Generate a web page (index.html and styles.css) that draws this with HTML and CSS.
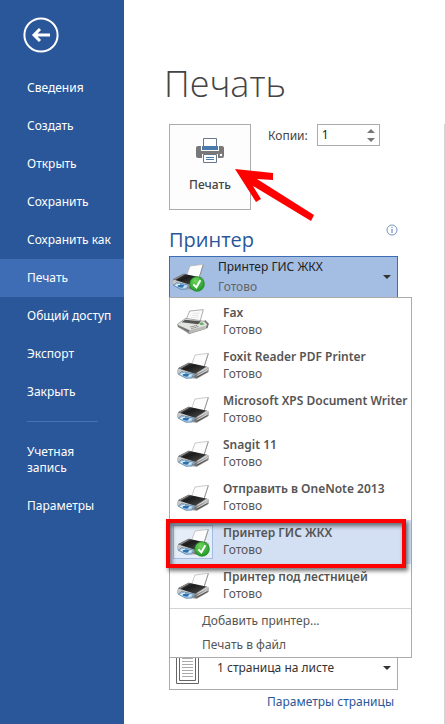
FILE: index.html
```html
<!DOCTYPE html>
<html lang="ru">
<head>
<meta charset="utf-8">
<meta name="viewport" content="width=device-width, initial-scale=1">
<title>Печать</title>
<link rel="stylesheet" href="styles.css">
</head>
<body>
<svg class="defs" aria-hidden="true">
  <defs>
    <linearGradient id="lid" x1="0" y1="0" x2="1" y2="1"><stop offset="0" stop-color="#555"/><stop offset=".4" stop-color="#1c1c1c"/><stop offset="1" stop-color="#555"/></linearGradient>
    <linearGradient id="side" x1="0" y1="0" x2="0" y2="1"><stop offset="0" stop-color="#ccc"/><stop offset="1" stop-color="#666"/></linearGradient>
    <radialGradient id="ok" cx=".4" cy=".3" r=".8"><stop offset="0" stop-color="#6fd45c"/><stop offset="1" stop-color="#169022"/></radialGradient>
  </defs>
  <symbol id="printer" viewBox="0 0 96 78">
    <path d="M2 60 40 76 60 77 94 56 92 48 50 62Z" fill="#aaa"/>
    <path d="M54 6 94 1 81 42 44 34Z" fill="#fcfcfc" stroke="#b0b0b0" stroke-width="2"/>
    <path d="M94 2 81 42" stroke="#777" stroke-width="2"/>
    <path d="M0 54 6 45 56 60 52 70 2 62Z" fill="#c5c7c8" stroke="#888"/>
    <path d="M3 46 35 29 90 41 56 63Z" fill="url(#lid)"/>
    <path d="M3 46 35 29 41 30 10 48Z" fill="#888"/>
    <path d="M55 62 88 41 95 44 94 57 58 76 49 72Z" fill="url(#side)" stroke="#777"/>
    <path d="M61 61 89 45M61 68 91 52" stroke="#f4f4f4" stroke-width="2"/>
    <path d="M61 72 92 55" stroke="#333" stroke-width="2"/>
    <path d="M4 64 14 56 50 63 44 75 27 76Z" fill="#a8cbea" stroke="#44729c" stroke-width="2"/>
    <path d="M17 61 37 63 31 71 19 69Z" fill="#2b71ac"/>
    <path d="M11 65 24 60M36 71 42 65" stroke="#fff" stroke-width="3"/>
  </symbol>
  <symbol id="fax" viewBox="0 0 96 78">
    <path d="M4 49 36 76 92 57 90 50Z" fill="#aaa"/>
    <path d="M38 6 79 2 69 38 27 33Z" fill="#fafafa" stroke="#888" stroke-width="2"/>
    <path d="M47 14 68 12M44 20 66 18M42 26 64 24" stroke="#ddd" stroke-width="2"/>
    <path d="M2 45 26 28 84 37 92 47 86 59 37 73 3 53Z" fill="#e2e4df" stroke="#888" stroke-width="2"/>
    <path d="M24 32 72 37 63 46 14 40Z" fill="#555"/>
    <path d="M3 48 38 64 37 72 3 53Z" fill="#777"/>
    <path d="M38 64 86 50 85 59 38 73Z" fill="#b7bab5"/>
    <path d="M40 54 60 49M43 59 66 52" stroke="#777" stroke-width="3" stroke-dasharray="4 2"/>
    <path d="M66 43 76 40 82 46 72 49Z" fill="#64ad61"/>
    <path d="M83 35 93 45 89 57" fill="none" stroke="#777" stroke-width="5"/>
  </symbol>
  <symbol id="check" viewBox="0 0 48 48">
    <circle cx="24" cy="24" r="22" fill="url(#ok)" stroke="#16881d" stroke-width="2"/>
    <path d="M13 25 22 34 34 13" fill="none" stroke="#fff" stroke-width="6"/>
  </symbol>
</svg>

<div class="backstage">
  <nav class="sidebar" aria-label="Файл">
    <button class="back" type="button" aria-label="Назад">
      <svg viewBox="0 0 36 36"><circle cx="18" cy="18" r="16.6" fill="none" stroke="#fff" stroke-width="2"/><path d="M27 18H11M17 12 11 18 17 24" fill="none" stroke="#fff" stroke-width="3"/></svg>
    </button>
    <a class="nav-item" href="#">Сведения</a>
    <a class="nav-item" href="#">Создать</a>
    <a class="nav-item" href="#">Открыть</a>
    <a class="nav-item" href="#">Сохранить</a>
    <a class="nav-item" href="#">Сохранить как</a>
    <a class="nav-item current" href="#" aria-current="page">Печать</a>
    <a class="nav-item" href="#">Общий доступ</a>
    <a class="nav-item" href="#">Экспорт</a>
    <a class="nav-item" href="#">Закрыть</a>
    <hr class="nav-rule">
    <a class="nav-item account" href="#">Учетная запись</a>
    <a class="nav-item" href="#">Параметры</a>
  </nav>

  <main class="content">
    <h1 class="title">Печать</h1>
    <div class="panel">
      <div class="print-row">
        <button class="print-button" type="button">
          <svg class="print-icon" viewBox="0 0 28 26">
            <path d="M2 8H26Q28 8 28 10V18Q28 20 26 20H2Q0 20 0 18V10Q0 8 2 8Z" fill="#7a7778"/>
            <path d="M5 7H23V13H5Z" fill="#fcfcfc"/>
            <path d="M7.500 8V.5H20.500V8" fill="#fff" stroke="#66788a"/>
            <path d="M6 8H22V12H6Z" fill="#4b7baa"/>
            <path d="M6 16H22V26H6Z" fill="#fcfcfc"/>
            <path d="M7.500 16.500H20.500V24.500H7.500Z" fill="#fff" stroke="#66788a"/>
            <path d="M10 19.500H18M10 21.500H18" stroke="#4b7baa"/>
            <circle cx="25" cy="17" r="1.200" fill="#fff"/>
          </svg>
          <span>Печать</span>
        </button>
        <label class="copies-label" for="copies">Копии:</label>
        <div class="spinner">
          <input id="copies" type="number" value="1" min="1">
          <div class="steps">
            <button type="button" aria-label="Больше"><svg viewBox="0 0 8 4"><path d="M0 4 4 0 8 4Z"/></svg></button>
            <button type="button" aria-label="Меньше"><svg viewBox="0 0 8 4"><path d="M0 0H8L4 4Z"/></svg></button>
          </div>
        </div>
        <svg class="pointer" viewBox="0 0 80 52" aria-hidden="true"><path d="M0 0 38 4V11L22 10 79 46 76 52 18 17 26 30 21 33Z" fill="#f00"/></svg>
      </div>

      <div class="section-head">
        <h2>Принтер</h2>
        <svg class="info" viewBox="0 0 12 12" role="img" aria-label="Сведения о принтере"><circle cx="6" cy="6" r="5" fill="#fff" stroke="#7195c0"/><path d="M6 5V9M6 3V4" stroke="#4c78ac"/></svg>
      </div>

      <div class="printer-picker">
        <button class="printer-current" type="button" aria-haspopup="listbox" aria-expanded="true">
          <span class="device"><svg class="device-icon"><use href="#printer"/></svg><svg class="ready"><use href="#check"/></svg></span>
          <span class="current-text"><span>Принтер ГИС ЖКХ</span><span class="state">Готово</span></span>
          <svg class="caret" viewBox="0 0 8 4"><path d="M0 0H8L4 4Z"/></svg>
        </button>
        <div class="menu">
          <ul class="printers" role="listbox" aria-label="Принтер">
            <li class="printer" role="option"><span class="device"><svg class="device-icon"><use href="#fax"/></svg></span><span class="text"><b>Fax</b><span>Готово</span></span></li>
            <li class="printer" role="option"><span class="device"><svg class="device-icon"><use href="#printer"/></svg></span><span class="text"><b>Foxit Reader PDF Printer</b><span>Готово</span></span></li>
            <li class="printer" role="option"><span class="device"><svg class="device-icon"><use href="#printer"/></svg></span><span class="text"><b>Microsoft XPS Document Writer</b><span>Готово</span></span></li>
            <li class="printer" role="option"><span class="device"><svg class="device-icon"><use href="#printer"/></svg></span><span class="text"><b>Snagit 11</b><span>Готово</span></span></li>
            <li class="printer" role="option"><span class="device"><svg class="device-icon"><use href="#printer"/></svg></span><span class="text"><b>Отправить в OneNote 2013</b><span>Готово</span></span></li>
            <li class="printer selected" role="option" aria-selected="true"><span class="device"><svg class="device-icon"><use href="#printer"/></svg><svg class="ready"><use href="#check"/></svg></span><span class="text"><b>Принтер ГИС ЖКХ</b><span>Готово</span></span><span class="highlight"></span></li>
            <li class="printer" role="option"><span class="device"><svg class="device-icon"><use href="#printer"/></svg></span><span class="text"><b>Принтер под лестницей</b><span>Готово</span></span></li>
          </ul>
          <div class="commands">
            <button type="button">Добавить принтер...</button>
            <button type="button">Печать в файл</button>
          </div>
        </div>
      </div>

      <div class="pages">
        <svg class="sheet" viewBox="0 0 23 31" aria-hidden="true"><path d="M.5.5H22.500V30.500H.5Z" fill="#fff" stroke="#666"/><path d="M3.500.5H19.500V27.500H3.500Z" fill="#fff" stroke="#666"/><path d="M6 5.500H17M6 8.500H17M6 11.500H17M6 14.500H17M6 17.500H17M6 20.500H17M6 23.500H17" stroke="#aaa"/></svg>
        <select aria-label="Страниц на листе"><option>1 страница на листе</option></select>
        <svg class="caret" viewBox="0 0 8 4" aria-hidden="true"><path d="M0 0H8L4 4Z"/></svg>
      </div>
      <a class="page-setup" href="#">Параметры страницы</a>
    </div>
  </main>
</div>
</body>
</html>
```
FILE: styles.css
```css
* { box-sizing: border-box; }

body {
  margin: 0;
  background: #fff;
  color: #444;
  font: 12px/16px "Noto Sans", "Open Sans", sans-serif;
}

button, input, select {
  margin: 0;
  padding: 0;
  border: 0;
  background: none;
  color: inherit;
  font: inherit;
}

svg { display: block; }
.defs { position: absolute; width: 0; height: 0; }

.backstage { display: flex; min-height: 100vh; }

/* Sidebar */
.sidebar {
  flex: 0 0 124px;
  padding-top: 17px;
  background: #2a579a;
  color: #fff;
}
.back { display: block; margin: 0 0 16px 23px; }
.back svg { width: 36px; height: 36px; }
.nav-item {
  display: block;
  padding: 11px 12px 11px 27px;
  color: inherit;
  text-decoration: none;
  white-space: nowrap;
}
.nav-item.current { background: #3e6db5; }
.nav-item.account { padding-right: 40px; white-space: normal; }
.nav-rule {
  height: 1px;
  margin: 10px 26px 11px 27px;
  border: 0;
  background: #4472b4;
}

/* Print page */
.content { flex: 1; min-width: 0; }
.title {
  margin: 0;
  padding: 58px 0 14px 40px;
  font: 300 36px/52px "Open Sans", sans-serif;
}
.panel {
  min-height: calc(100vh - 124px);
  padding: 0 46px 12px 45px;
  border-right: 1px solid #d4d4d4;
}
.print-row { position: relative; display: flex; align-items: flex-start; }
.print-button {
  display: flex;
  flex-direction: column;
  align-items: center;
  gap: 13px;
  width: 82px;
  height: 86px;
  padding-top: 13px;
  border: 1px solid #ababab;
  background: #fdfdfd;
  font-weight: 500;
}
.print-icon { width: 28px; height: 26px; }
.copies-label { margin: 4px 9px 0 17px; }
.spinner {
  display: flex;
  width: 63px;
  height: 22px;
  border: 1px solid #ababab;
  color: #222;
}
.spinner input {
  flex: 1;
  min-width: 0;
  padding-left: 4px;
  outline: 0;
  appearance: textfield;
}
.spinner input::-webkit-inner-spin-button { display: none; }
.steps {
  display: flex;
  flex-direction: column;
  justify-content: space-between;
  padding: 4px 4px 3px;
}
.steps svg { width: 8px; height: 4px; fill: #777; }
.pointer {
  position: absolute;
  top: 45px;
  left: 66px;
  width: 80px;
  height: 52px;
}

.section-head {
  display: flex;
  justify-content: space-between;
  margin-top: 14px;
  height: 32px;
}
.section-head h2 {
  margin: 0;
  color: #2a579a;
  font: 400 20px/32px "Open Sans", sans-serif;
}
.info { width: 12px; height: 12px; }

.printer-picker { position: relative; }
.printer-current {
  display: flex;
  align-items: center;
  width: 100%;
  height: 42px;
  padding: 0 6px 0 2px;
  border: 1px solid #3e6db5;
  background: #a3bde3;
  color: #222;
  text-align: left;
}
.current-text { display: grid; flex: 1; gap: 4px; padding-left: 14px; }
.state { color: #666; }
.caret { width: 8px; height: 4px; fill: #333; }

.device { position: relative; flex: 0 0 32px; }
.device-icon { width: 32px; height: 26px; }
.ready { position: absolute; right: -1px; bottom: -2px; width: 16px; height: 16px; }

.menu {
  position: absolute;
  z-index: 1;
  top: 41px;
  right: -14px;
  left: 0;
  padding-top: 2px;
  border: 1px solid #ababab;
  background: #fff;
  color: #555;
}
.printers { margin: 0; padding: 0; list-style: none; }
.printer {
  position: relative;
  display: flex;
  align-items: center;
  height: 44px;
  padding-left: 7px;
}
.text { display: grid; padding: 0 0 2px 14px; line-height: 17px; white-space: nowrap; }
.text b { font-weight: 600; }
.printer.selected { background: #d3dff2; }
.selected .device { outline: 1px solid #a3bde3; outline-offset: 3px; background: #e5edf8; box-shadow: 0 0 0 3px #e5edf8; }
.highlight {
  position: absolute;
  inset: -1px 5px -4px -4px;
  border: 4px solid #f00;
  box-shadow: 2px 3px 4px #0008, inset 2px 3px 4px #0008;
}
.commands { border-top: 1px solid #d4d4d4; }
.commands button { display: block; width: 100%; padding: 4px 0 4px 32px; text-align: left; }

.pages {
  display: flex;
  align-items: center;
  height: 44px;
  margin-top: 348px;
  padding: 0 6px;
  border: 1px solid #ababab;
  color: #333;
}
.sheet { width: 23px; height: 31px; }
.pages select { flex: 1; min-width: 0; padding-left: 18px; appearance: none; }
.page-setup {
  display: block;
  margin: 4px 4px 0 0;
  color: #2a579a;
  text-align: right;
  text-decoration: none;
}
```
